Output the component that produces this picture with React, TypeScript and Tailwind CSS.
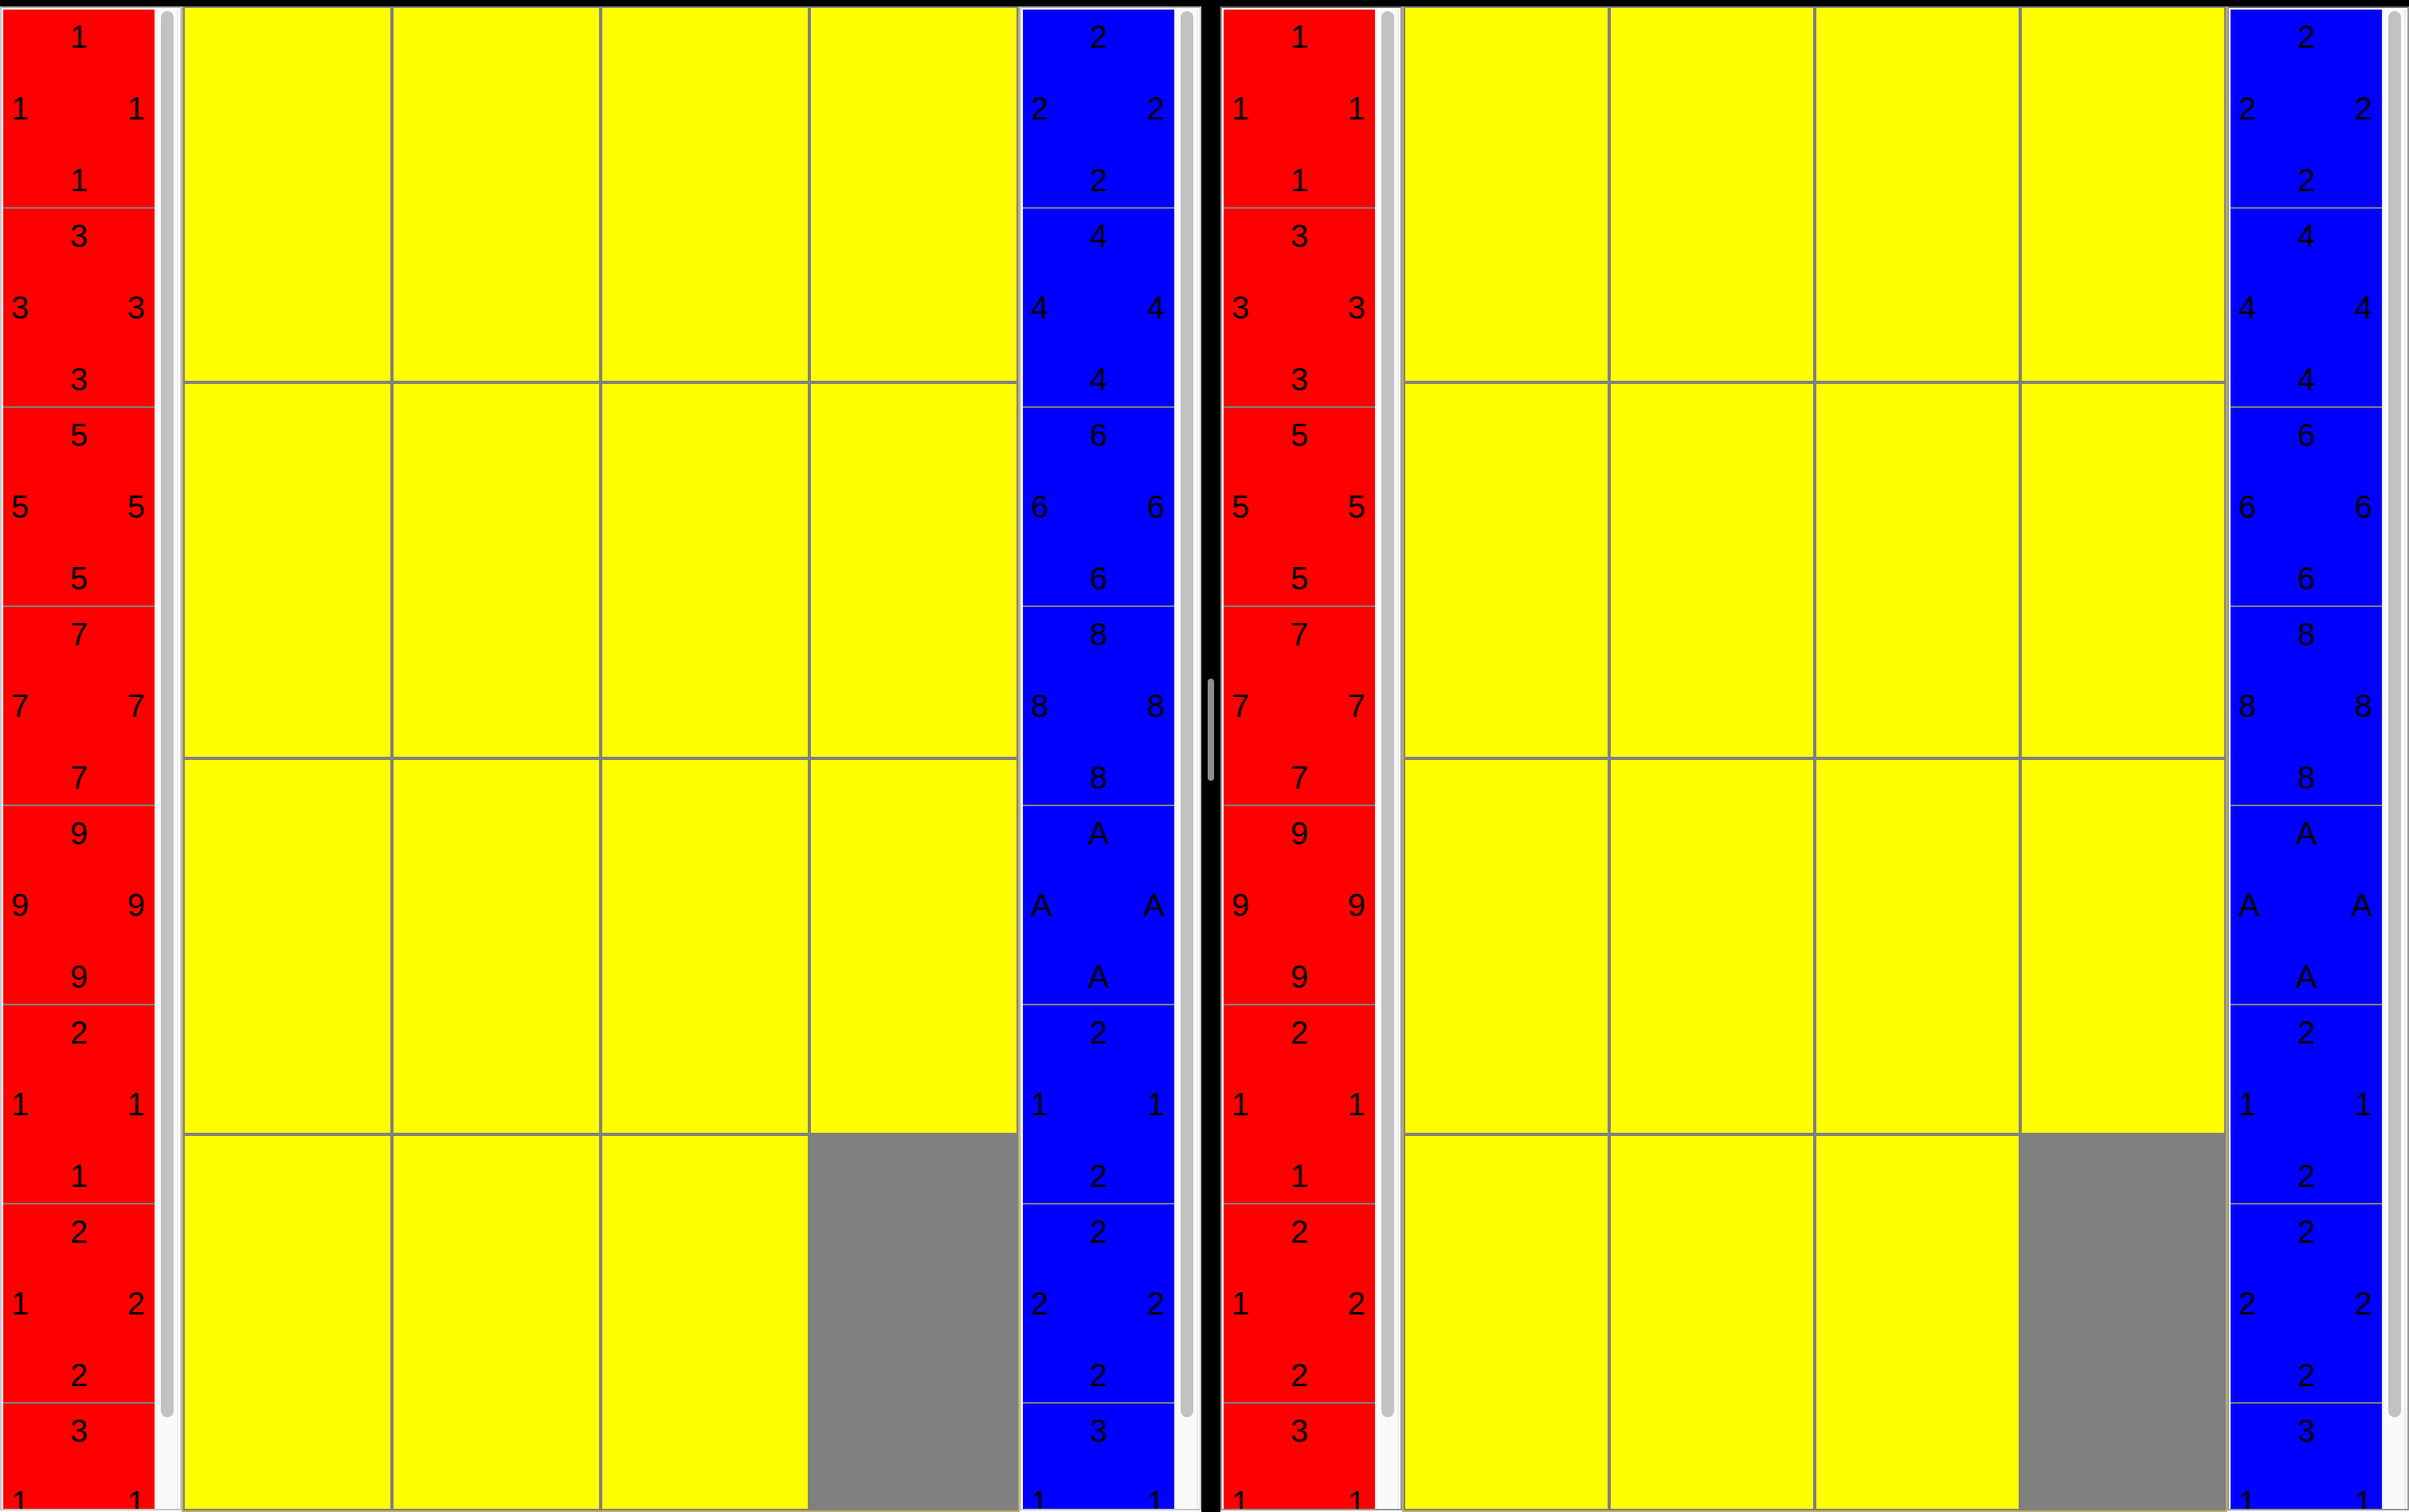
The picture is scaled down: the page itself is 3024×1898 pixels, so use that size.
type Tile = { top: string; left: string; right: string; bottom: string };

const tile = (top: string, left = top, right = top, bottom = top): Tile => ({ top, left, right, bottom });

const RED_TILES: Tile[] = [
  tile("1"),
  tile("3"),
  tile("5"),
  tile("7"),
  tile("9"),
  tile("2", "1", "1", "1"),
  tile("2", "1", "2", "2"),
  tile("3", "1", "1", "3"),
];

const BLUE_TILES: Tile[] = [
  tile("2"),
  tile("4"),
  tile("6"),
  tile("8"),
  tile("A"),
  tile("2", "1", "1", "2"),
  tile("2"),
  tile("3", "1", "1", "3"),
];

const CELL_COUNT = 16;

function TileList({ tiles, fill, frame }: { tiles: Tile[]; fill: string; frame: string }) {
  return (
    <section className={`mb-[2px] flex w-[228px] shrink-0 overflow-hidden border-2 bg-white px-[2px] pt-[2px] ${frame}`}>
      <ul className="min-w-0 flex-1 overflow-hidden">
        {tiles.map((t, i) => (
          <li
            key={i}
            className={`flex h-[250px] flex-col justify-between border-b-2 border-[#808080] py-[11px] text-center ${fill}`}
          >
            <span>{t.top}</span>
            <span className="flex justify-between pl-[10px] pr-3">
              <span>{t.left}</span>
              <span>{t.right}</span>
            </span>
            <span>{t.bottom}</span>
          </li>
        ))}
      </ul>
      <div className="w-[30px] shrink-0 border-x-2 border-[#ededed] bg-[#fafafa] py-[2px] pl-[6px]">
        <div className="h-[94%] w-4 rounded-full bg-[#c2c2c2]" />
      </div>
    </section>
  );
}

function Board() {
  return (
    <main className="grid min-w-0 flex-1 grid-cols-4 grid-rows-4 border-x-2 border-b-2 border-[#bbad6b]">
      {Array.from({ length: CELL_COUNT }, (_, i) => (
        <div
          key={i}
          className={
            i === CELL_COUNT - 1
              ? "border-2 border-[#808080] bg-[#808080]"
              : "border-2 border-[#808080] bg-[#ffff00]"
          }
        />
      ))}
    </main>
  );
}

function Pane({ frame }: { frame: string }) {
  return (
    <div className="flex min-h-0 min-w-0 bg-white">
      <TileList tiles={RED_TILES} fill="bg-[#ff0000]" frame={frame} />
      <Board />
      <TileList tiles={BLUE_TILES} fill="bg-[#0000ff]" frame={frame} />
    </div>
  );
}

export default function App() {
  return (
    <div className="grid h-screen grid-cols-[377fr_24px_373fr] grid-rows-[minmax(0,1fr)] overflow-hidden bg-black pt-2 font-['Liberation_Sans',Arial,sans-serif] text-[40px] leading-[46px] text-black">
      <Pane frame="border-[#c8c8c8] border-t-[#a8a8a8]" />
      <div role="separator" aria-orientation="vertical" className="flex items-center justify-center pb-[74px]">
        <div className="h-32 w-2 rounded-full bg-[#8e8e8e]" />
      </div>
      <Pane frame="border-[#999999] border-t-[#666666]" />
    </div>
  );
}
